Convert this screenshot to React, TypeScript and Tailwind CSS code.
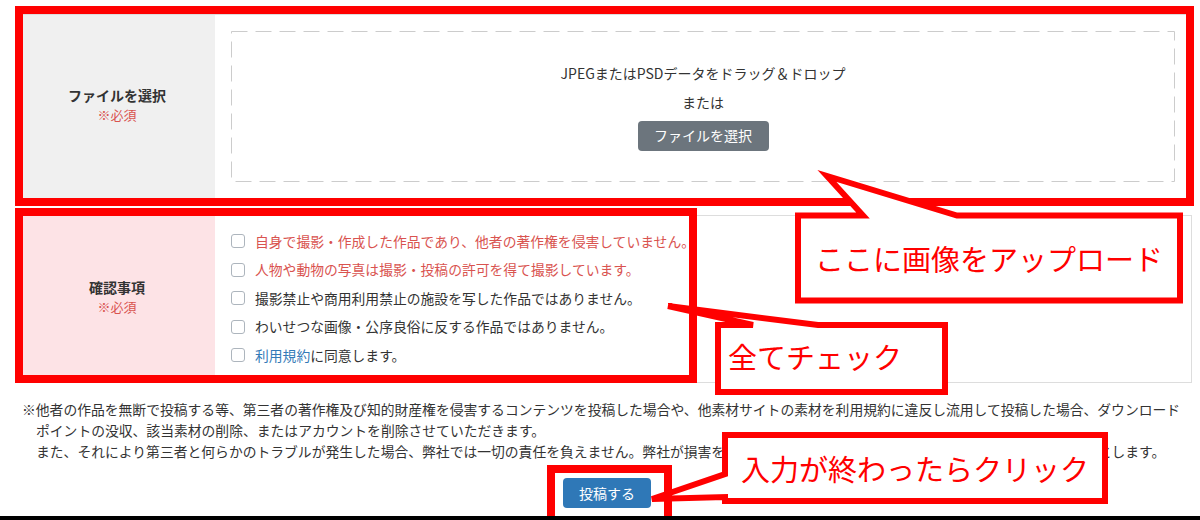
const checks = [
  { text: '自身で撮影・作成した作品であり、他者の著作権を侵害していません。', red: true },
  { text: '人物や動物の写真は撮影・投稿の許可を得て撮影しています。', red: true },
  { text: '撮影禁止や商用利用禁止の施設を写した作品ではありません。', red: false },
  { text: 'わいせつな画像・公序良俗に反する作品ではありません。', red: false },
];

function Checkbox() {
  return <span className="w-[14px] h-[14px] rounded-[3px] border border-[#adb5bd] bg-white shrink-0" />;
}

function Annotations() {
  return (
    <>
      <svg
        className="absolute left-0 top-0 pointer-events-none"
        width="1200"
        height="520"
        viewBox="0 0 1200 520"
      >
        {/* highlight boxes */}
        <rect x="19" y="10" width="1171" height="192" fill="none" stroke="#ff0000" strokeWidth="8" />
        <rect x="19" y="212" width="674" height="167" fill="none" stroke="#ff0000" strokeWidth="8" />

        {/* callout: upload */}
        <path
          d="M798 215.5 L863 215.5 L827 176 L957 215.5 L1180 215.5 L1180 300.5 L798 300.5 Z"
          fill="#fff"
          stroke="#ff0000"
          strokeWidth="6"
        />
        {/* callout: check all */}
        <path
          d="M718 325 L753 325 L668 306 L818 325 L945 325 L945 392 L718 392 Z"
          fill="#fff"
          stroke="#ff0000"
          strokeWidth="6"
        />
        {/* callout: click */}
        <path
          d="M725 435 L1105 435 L1105 501 L725 501 L725 497 L652 499 L725 474 Z"
          fill="#fff"
          stroke="#ff0000"
          strokeWidth="6"
        />
        <rect x="551" y="469" width="117" height="70" fill="none" stroke="#ff0000" strokeWidth="8" />
      </svg>

      <div className="absolute left-[801px] top-[218px] w-[376px] h-[80px] flex items-center justify-center text-[29px] leading-none text-[#f00] whitespace-nowrap">
        ここに画像をアップロード
      </div>
      <div className="absolute left-[722px] top-[326px] w-[220px] h-[61px] flex items-center pl-[6px] text-[29px] leading-none text-[#f00] whitespace-nowrap">
        全てチェック
      </div>
      <div className="absolute left-[728px] top-[438px] w-[374px] h-[60px] flex items-center justify-center text-[29px] leading-none text-[#f00] whitespace-nowrap">
        入力が終わったらクリック
      </div>

      <div className="absolute left-0 top-[516px] w-full h-[4px] bg-black" />
    </>
  );
}

export default function App() {
  return (
    <div className="relative w-[1200px] h-[520px] overflow-hidden bg-white text-[#333] font-['Noto_Sans_CJK_JP',sans-serif]">
      <div className="pl-[22px] pr-[8px] pt-[14px]">
        {/* file select */}
        <div className="flex h-[185px] border border-[#ddd]">
          <div className="w-[192px] shrink-0 bg-[#f0f0f0] flex flex-col items-center justify-center pb-[3px] pr-[4px]">
            <div className="text-[14px] font-bold leading-[19px]">ファイルを選択</div>
            <div className="text-[13px] leading-[19px] text-[#d9534f]">※必須</div>
          </div>
          <div className="flex-1 p-[16px]">
            <div className="relative h-full flex flex-col items-center justify-center">
              <svg className="absolute left-0 top-0" width="944" height="151">
                <rect x="0.5" y="0.5" width="943" height="150" fill="none" stroke="#cccccc" strokeDasharray="16 8" />
              </svg>
              <div className="relative text-[14px] leading-[20px]">JPEGまたはPSDデータをドラッグ＆ドロップ</div>
              <div className="relative text-[14px] leading-[20px] mt-[9px]">または</div>
              <button className="relative mt-[9px] h-[30px] w-[131px] rounded-[4px] bg-[#6c757d] text-white text-[14px]">
                ファイルを選択
              </button>
            </div>
          </div>
        </div>

        {/* confirmations */}
        <div className="flex h-[168px] mt-[16px] border border-[#ddd]">
          <div className="w-[192px] shrink-0 bg-[#fde3e6] flex flex-col items-center justify-center pb-[4px] pr-[4px]">
            <div className="text-[14px] font-bold leading-[20px]">確認事項</div>
            <div className="text-[13px] leading-[20px] text-[#d9534f]">※必須</div>
          </div>
          <div className="flex-1 pl-[16px] pt-[11px] text-[13.8px]">
            {checks.map(c => (
              <label key={c.text} className="flex items-center gap-[10px] h-[28.5px]">
                <Checkbox />
                <span className={c.red ? 'text-[#d9534f]' : 'text-[#333]'}>{c.text}</span>
              </label>
            ))}
            <label className="flex items-center gap-[10px] h-[28.5px]">
              <Checkbox />
              <span>
                <span className="text-[#337ab7]">利用規約</span>に同意します。
              </span>
            </label>
          </div>
        </div>

        {/* notes */}
        <p className="mt-[16px] pl-[14px] indent-[-14px] text-[13.8px] leading-[21px] whitespace-nowrap">
          ※他者の作品を無断で投稿する等、第三者の著作権及び知的財産権を侵害するコンテンツを投稿した場合や、他素材サイトの素材を利用規約に違反し流用して投稿した場合、ダウンロード
          <br />
          ポイントの没収、該当素材の削除、またはアカウントを削除させていただきます。
          <br />
          また、それにより第三者と何らかのトラブルが発生した場合、弊社では一切の責任を負えません。弊社が損害を被った場合には、相応の損害賠償を請求させていただくものとします。
        </p>

        <div className="flex justify-center mt-[16px]">
          <button className="h-[30px] w-[88px] rounded-[4px] bg-[#2f78b7] text-white text-[14px]">投稿する</button>
        </div>
      </div>

      <Annotations />
    </div>
  );
}
